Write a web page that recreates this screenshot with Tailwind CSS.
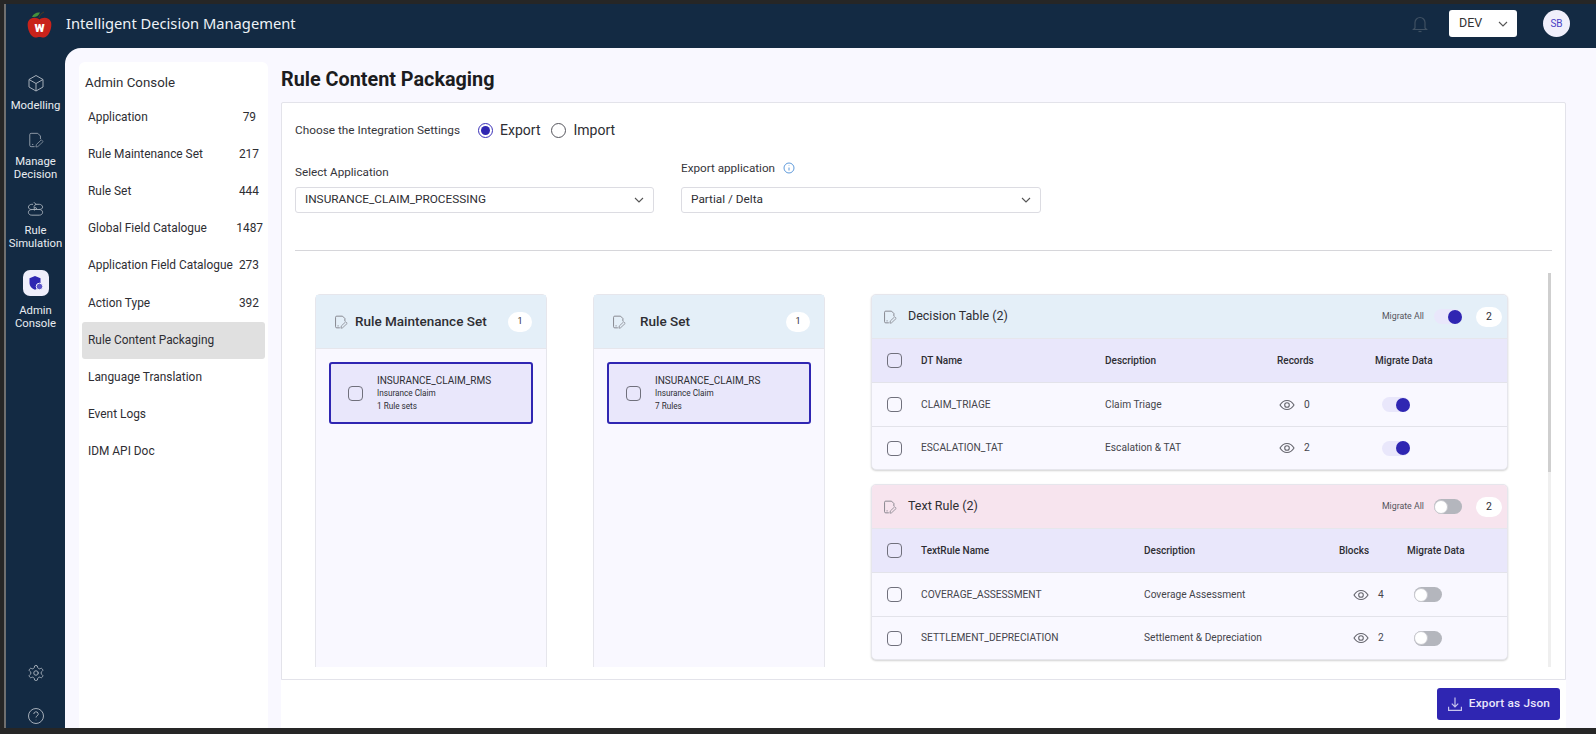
<!DOCTYPE html>
<html lang="en">
<head>
<meta charset="UTF-8">
<title>Rule Content Packaging</title>
<script src="https://cdn.jsdelivr.net/npm/@tailwindcss/browser@4"></script>
</head>
<body class="h-[734px] w-[1596px] overflow-hidden bg-[#262626] pt-1 pb-[6px] pl-1 font-['Roboto',sans-serif] text-[#2e2e33]">
<svg class="hidden">
  <symbol id="edit" viewBox="0 0 18 18" fill="none" stroke="currentColor" stroke-width="1.100" stroke-linecap="round" stroke-linejoin="round">
    <path d="M7 16.500H3.500a1.500 1.500 0 0 1-1.500-1.500V3a1.500 1.500 0 0 1 1.500-1.500h7.500l3 3v3"/>
    <path d="M9 16.500l.4-2.400 5.600-5.300 2 2-5.600 5.300z" stroke-width="0.900"/>
    <path d="M5 14h.5"/>
  </symbol>
  <symbol id="eye" viewBox="0 0 16 16" fill="none" stroke="currentColor" stroke-width="1.100">
    <path d="M1 8c1.800-3 4.200-4.500 7-4.500S13.200 5 15 8c-1.800 3-4.200 4.500-7 4.500S2.800 11 1 8z"/><circle cx="8" cy="8" r="2.300"/>
  </symbol>
</svg>
<div class="flex h-full flex-col border-l-2 border-[#6f6f6f] bg-[#132a43]">
  <header class="flex h-[44px] shrink-0 items-center pb-[5px]">
    <div class="flex w-[59px] justify-center">
      <svg width="25" height="27" viewBox="0 0 25 27" class="mt-[2px] ml-[8px]">
        <path d="M12.500 8.500C15 6 22 5.500 24 11c1.500 5-2 15-7 15.500-1.800.2-3-.6-4.500-.6s-2.700.8-4.500.6C3 26 -.5 16 1 11 3 5.500 10 6 12.500 8.500z" fill="#c9231b"/>
        <path d="M5 6c1.500-3.500 4.500-5 8-4.500C11.500 5 9 6.500 5 6z" fill="#46913c"/>
        <path d="M12 7c.4-2.500 2-4.500 5-6" stroke="#4a3a20" stroke-width="1" fill="none"/>
        <text x="12.500" y="21" text-anchor="middle" font-family="Roboto" font-size="14" font-weight="900" fill="#fff">w</text>
      </svg>
    </div>
    <div class="ml-[1px] font-['Noto_Sans',sans-serif] text-[14.700px] text-[#eef2f7]">Intelligent Decision Management</div>
    <svg class="ml-auto text-[#3f5062]" width="16" height="18" viewBox="0 0 16 18" fill="none" stroke="currentColor" stroke-width="1.200"><path d="M3 13V7.500a5 5 0 0 1 10 0V13l1.500 1.500h-13z"/><path d="M6.500 16.500h3"/></svg>
    <div class="ml-[21px] flex h-[27px] w-[68px] items-center justify-between rounded-[3px] bg-white pr-[9px] pl-[10px] text-[12.500px] text-[#333]">
      <span>DEV</span>
      <svg width="10" height="6" viewBox="0 0 10 6" fill="none" stroke="#555" stroke-width="1.100"><path d="M1 1l4 4 4-4"/></svg>
    </div>
    <div class="mr-[26px] ml-[26px] flex h-[27px] w-[27px] items-center justify-center rounded-full bg-[#f0effb] text-[10px] text-[#4a3fc4]">SB</div>
  </header>
  <div class="flex min-h-0 flex-1">
    <aside class="flex w-[59px] shrink-0 flex-col items-center text-center text-[11.300px] leading-[13.500px] text-[#e9edf2]">
      <svg class="mt-[26px] text-[#a5aeb9]" width="18" height="18" viewBox="0 0 18 18" fill="none" stroke="currentColor" stroke-width="1"><path d="M9 1.500l7 4v7.500l-7 4-7-4V5.500z"/><path d="M2 5.500l7 4 7-4M9 9.500V17"/></svg>
      <div class="mt-[7px]">Modelling</div>
      <svg class="mt-[19px] text-[#8f9aa7]" width="16" height="16"><use href="#edit"/></svg>
      <div class="mt-[7px]">Manage<br>Decision</div>
      <svg class="mt-[19px] text-[#a5aeb9]" width="17" height="17" viewBox="0 0 18 18" fill="none" stroke="currentColor" stroke-width="1" stroke-linecap="round" stroke-linejoin="round"><path d="M6 3.500H5C3 3.500 1.500 5 1.500 6.500S3 9 5 9h8c2 0 3.500 1.200 3.500 3s-1.500 3-3.500 3H5c-2 0-3.500-1.200-3.500-3S3 9 5 9"/><path d="M13 9c2 0 3.500-1 3.500-2.500S15 3.500 13 3.500H9"/><path d="M7.500 1.500L9.500 3.500 7.500 5.500"/><path d="M8 6.500l2.500 1.500L8 9.500z"/></svg>
      <div class="mt-[6px]">Rule<br>Simulation</div>
      <div class="mt-[19px] flex h-[26px] w-[26px] items-center justify-center rounded-[7px] bg-[#f0effb]">
        <svg width="16" height="16" viewBox="0 0 16 16"><path d="M7 1l5.500 2.300v4.500c0 3.500-2.500 6-5.500 7-3-1-5.500-3.500-5.500-7V3.300z" fill="#2f26b2"/><circle cx="11.500" cy="11.500" r="3.300" fill="#5c54c9" stroke="#f0effb" stroke-width="1"/></svg>
      </div>
      <div class="mt-[8px]">Admin<br>Console</div>
      <svg class="mt-auto text-[#a5aeb9]" width="18" height="18" viewBox="0 0 24 24" fill="none" stroke="currentColor" stroke-width="1.300" stroke-linecap="round" stroke-linejoin="round"><path d="M12.220 2h-.44a2 2 0 0 0-2 2v.18a2 2 0 0 1-1 1.730l-.43.25a2 2 0 0 1-2 0l-.15-.08a2 2 0 0 0-2.730.73l-.22.380a2 2 0 0 0 .730 2.730l.15.100a2 2 0 0 1 1 1.720v.510a2 2 0 0 1-1 1.740l-.15.090a2 2 0 0 0-.730 2.730l.22.380a2 2 0 0 0 2.730.730l.15-.080a2 2 0 0 1 2 0l.43.250a2 2 0 0 1 1 1.730V20a2 2 0 0 0 2 2h.44a2 2 0 0 0 2-2v-.18a2 2 0 0 1 1-1.730l.43-.25a2 2 0 0 1 2 0l.15.080a2 2 0 0 0 2.730-.730l.22-.390a2 2 0 0 0-.730-2.730l-.15-.080a2 2 0 0 1-1-1.740v-.5a2 2 0 0 1 1-1.740l.15-.090a2 2 0 0 0 .730-2.730l-.22-.380a2 2 0 0 0-2.730-.730l-.15.080a2 2 0 0 1-2 0l-.43-.250a2 2 0 0 1-1-1.730V4a2 2 0 0 0-2-2z"/><circle cx="12" cy="12" r="3"/></svg>
      <svg class="mt-[25px] mb-[3px] text-[#a5aeb9]" width="18" height="18" viewBox="0 0 18 18" fill="none" stroke="currentColor" stroke-width="1"><circle cx="9" cy="9" r="7.500"/><path d="M6.800 7a2.200 2.200 0 1 1 3.300 1.900c-.8.500-1.100.9-1.100 1.600"/><path d="M9 12.800v.4"/></svg>
    </aside>
    <main class="flex min-w-0 flex-1 gap-[13px] rounded-tl-2xl bg-[#f9f8ff] pt-[14px] pl-[14px]">
      <nav class="w-[189px] shrink-0 rounded-t-md bg-white text-[11.900px] text-[#2e2e33]">
        <div class="px-[6px] pt-[11px] pb-[6px] text-[13.300px]">Admin Console</div>
        <div class="flex h-[37.200px] items-center justify-between pr-[10px] pl-[9px]"><span>Application</span><span class="mr-[2px]">79</span></div>
        <div class="flex h-[37.200px] items-center justify-between pr-[9px] pl-[9px]"><span>Rule Maintenance Set</span><span>217</span></div>
        <div class="flex h-[37.200px] items-center justify-between pr-[9px] pl-[9px]"><span>Rule Set</span><span>444</span></div>
        <div class="flex h-[37.200px] items-center justify-between pr-[5px] pl-[9px]"><span>Global Field Catalogue</span><span>1487</span></div>
        <div class="flex h-[37.200px] items-center justify-between pr-[9px] pl-[9px]"><span>Application Field Catalogue</span><span>273</span></div>
        <div class="flex h-[37.200px] items-center justify-between pr-[9px] pl-[9px]"><span>Action Type</span><span>392</span></div>
        <div class="mx-[3px] flex h-[37.200px] items-center rounded-[3px] bg-[#e0e0e0] pl-[6px]">Rule Content Packaging</div>
        <div class="flex h-[37.200px] items-center pl-[9px]">Language Translation</div>
        <div class="flex h-[37.200px] items-center pl-[9px]">Event Logs</div>
        <div class="flex h-[37.200px] items-center pl-[9px]">IDM API Doc</div>
      </nav>
      <section class="flex w-[1285px] min-w-0 shrink-0 flex-col">
        <h1 class="h-[40px] text-[19.800px] leading-[36px] font-bold text-[#1c1c20]">Rule Content Packaging</h1>
        <div class="flex h-[578px] shrink-0 flex-col rounded-t-[2px] border border-[#e3e3ea] bg-white pt-[17px]">
          <div class="flex items-center pl-[13px] text-[11.800px]">
            <span class="text-[#35353a]">Choose the Integration Settings</span>
            <span class="ml-[18px] flex h-[15px] w-[15px] items-center justify-center rounded-full border border-[#3a30b8]"><span class="h-[9px] w-[9px] rounded-full bg-[#2f26b2]"></span></span>
            <span class="ml-[7px] text-[14px]">Export</span>
            <span class="ml-[11px] h-[15px] w-[15px] rounded-full border border-[#55555c]"></span>
            <span class="ml-[7px] text-[14px]">Import</span>
          </div>
          <div class="mt-[19px] flex gap-[27px] pl-[13px] text-[11.700px]">
            <div class="w-[359px]">
              <div class="mt-[4px] leading-[16px] text-[#35353a]">Select Application</div>
              <div class="mt-[7px] flex h-[26px] items-center justify-between rounded-[3px] border border-[#dcdce2] pr-[9px] pl-[9px] text-[11.800px]">INSURANCE_CLAIM_PROCESSING
                <svg width="10" height="6" viewBox="0 0 10 6" fill="none" stroke="#555" stroke-width="1.100"><path d="M1 1l4 4 4-4"/></svg>
              </div>
            </div>
            <div class="w-[360px]">
              <div class="flex items-center gap-[8px] leading-[16px] text-[#35353a]">Export application
                <svg width="12" height="12" viewBox="0 0 12 12" fill="none" stroke="#4d8fd6" stroke-width="0.900"><circle cx="6" cy="6" r="5"/><path d="M6 5.500v3M6 3.400v.5"/></svg>
              </div>
              <div class="mt-[11px] flex h-[26px] items-center justify-between rounded-[3px] border border-[#dcdce2] pr-[9px] pl-[9px] text-[11.800px]">Partial / Delta
                <svg width="10" height="6" viewBox="0 0 10 6" fill="none" stroke="#555" stroke-width="1.100"><path d="M1 1l4 4 4-4"/></svg>
              </div>
            </div>
          </div>
          <div class="mx-[13px] mt-[37px] h-px w-[1257px] shrink-0 bg-[#d6d6da]"></div>
          <div class="relative mt-[22px] mb-[12px] min-h-0 flex-1 overflow-hidden">
            <div class="flex items-start pt-[21px] pl-[33px]">
              <div class="h-[500px] w-[232px] shrink-0 rounded-[5px] border border-[#e6e6ec] bg-[#f9f8ff]">
                <div class="flex h-[54px] items-center border-b border-[#e6e6ec] bg-[#e4eff8] pr-[14px] pl-[18px]">
                  <svg class="text-[#77777f]" width="14" height="14"><use href="#edit"/></svg>
                  <span class="ml-[7px] text-[13.500px] font-medium">Rule Maintenance Set</span>
                  <span class="ml-auto flex h-[20px] w-[24px] items-center justify-center rounded-full bg-white text-[9px]">1</span>
                </div>
                <div class="mx-[13px] mt-[13px] flex h-[62px] items-center rounded-[3px] border-2 border-[#2f26b2] bg-[#e9e7fb] pl-[17px]">
                  <span class="h-[15px] w-[15px] rounded-[4px] border-[1.500px] border-[#70707c]"></span>
                  <div class="ml-[14px] text-[8.200px] leading-[13px]"><div class="text-[10px]">INSURANCE_CLAIM_RMS</div><div>Insurance Claim</div><div>1 Rule sets</div></div>
                </div>
              </div>
              <div class="ml-[46px] h-[500px] w-[232px] shrink-0 rounded-[5px] border border-[#e6e6ec] bg-[#f9f8ff]">
                <div class="flex h-[54px] items-center border-b border-[#e6e6ec] bg-[#e4eff8] pr-[14px] pl-[18px]">
                  <svg class="text-[#77777f]" width="14" height="14"><use href="#edit"/></svg>
                  <span class="ml-[14px] text-[13.500px] font-medium">Rule Set</span>
                  <span class="ml-auto flex h-[20px] w-[24px] items-center justify-center rounded-full bg-white text-[9px]">1</span>
                </div>
                <div class="mx-[13px] mt-[13px] flex h-[62px] items-center rounded-[3px] border-2 border-[#2f26b2] bg-[#e9e7fb] pl-[17px]">
                  <span class="h-[15px] w-[15px] rounded-[4px] border-[1.500px] border-[#70707c]"></span>
                  <div class="ml-[14px] text-[8.200px] leading-[13px]"><div class="text-[10px]">INSURANCE_CLAIM_RS</div><div>Insurance Claim</div><div>7 Rules</div></div>
                </div>
              </div>
              <div class="ml-[46px] w-[637px] shrink-0">
                <div class="overflow-hidden rounded-[5px] border border-[#e6e6ec] bg-[#f9f8ff] shadow-[0_1px_2px_#0000002e]">
                  <div class="flex h-[44px] items-center border-b border-[#e6e6ec] bg-[#e4eff8] pr-[5px] pl-[11px]">
                    <svg class="text-[#77777f]" width="14" height="14"><use href="#edit"/></svg>
                    <span class="ml-[11px] text-[12.500px]">Decision Table (2)</span>
                    <span class="ml-auto text-[8.800px] text-[#55555c]">Migrate All</span>
                    <span class="relative ml-[10px] h-[15px] w-[28px] rounded-full bg-[#e9e7fb]"><span class="absolute top-[0.500px] right-0 h-[14px] w-[14px] rounded-full bg-[#2f26b2]"></span></span>
                    <span class="ml-[14px] flex h-[20px] w-[26px] items-center justify-center rounded-full bg-white text-[10.500px]">2</span>
                  </div>
                  <div class="flex h-[44px] items-center border-b border-[#e3e3ea] bg-[#e9e7fb] text-[10px] font-medium">
                    <span class="ml-[15px] h-[15px] w-[15px] shrink-0 rounded-[4px] border-[1.500px] border-[#70707c]"></span>
                    <span class="ml-[19px] w-[184px]">DT Name</span><span class="w-[172px]">Description</span><span class="w-[98px]">Records</span><span>Migrate Data</span>
                  </div>
                  <div class="flex h-[44px] items-center border-b border-[#e3e3ea] text-[10.200px] text-[#45454c]">
                    <span class="ml-[15px] h-[15px] w-[15px] shrink-0 rounded-[4px] border-[1.500px] border-[#70707c]"></span>
                    <span class="ml-[19px] w-[184px]">CLAIM_TRIAGE</span><span class="w-[174px]">Claim Triage</span>
                    <svg class="text-[#66666e]" width="16" height="16"><use href="#eye"/></svg><span class="ml-[9px] w-[78px]">0</span>
                    <span class="relative h-[15px] w-[28px] rounded-full bg-[#e9e7fb]"><span class="absolute top-[0.500px] right-0 h-[14px] w-[14px] rounded-full bg-[#2f26b2]"></span></span>
                  </div>
                  <div class="flex h-[42px] items-center text-[10.200px] text-[#45454c]">
                    <span class="ml-[15px] h-[15px] w-[15px] shrink-0 rounded-[4px] border-[1.500px] border-[#70707c]"></span>
                    <span class="ml-[19px] w-[184px]">ESCALATION_TAT</span><span class="w-[174px]">Escalation &amp; TAT</span>
                    <svg class="text-[#66666e]" width="16" height="16"><use href="#eye"/></svg><span class="ml-[9px] w-[78px]">2</span>
                    <span class="relative h-[15px] w-[28px] rounded-full bg-[#e9e7fb]"><span class="absolute top-[0.500px] right-0 h-[14px] w-[14px] rounded-full bg-[#2f26b2]"></span></span>
                  </div>
                </div>
                <div class="mt-[14px] overflow-hidden rounded-[5px] border border-[#e6e6ec] bg-[#f9f8ff] shadow-[0_1px_2px_#0000002e]">
                  <div class="flex h-[44px] items-center border-b border-[#e6e6ec] bg-[#f7e4ee] pr-[5px] pl-[11px]">
                    <svg class="text-[#77777f]" width="14" height="14"><use href="#edit"/></svg>
                    <span class="ml-[11px] text-[12.500px]">Text Rule (2)</span>
                    <span class="ml-auto text-[8.800px] text-[#55555c]">Migrate All</span>
                    <span class="relative ml-[10px] h-[15px] w-[28px] rounded-full bg-[#b4b6bd]"><span class="absolute top-[0.500px] left-0 h-[14px] w-[14px] rounded-full border border-[#c8c8ce] bg-white"></span></span>
                    <span class="ml-[14px] flex h-[20px] w-[26px] items-center justify-center rounded-full bg-white text-[10.500px]">2</span>
                  </div>
                  <div class="flex h-[44px] items-center border-b border-[#e3e3ea] bg-[#e9e7fb] text-[10px] font-medium">
                    <span class="ml-[15px] h-[15px] w-[15px] shrink-0 rounded-[4px] border-[1.500px] border-[#70707c]"></span>
                    <span class="ml-[19px] w-[223px]">TextRule Name</span><span class="w-[195px]">Description</span><span class="w-[68px]">Blocks</span><span>Migrate Data</span>
                  </div>
                  <div class="flex h-[44px] items-center border-b border-[#e3e3ea] text-[10.200px] text-[#45454c]">
                    <span class="ml-[15px] h-[15px] w-[15px] shrink-0 rounded-[4px] border-[1.500px] border-[#70707c]"></span>
                    <span class="ml-[19px] w-[223px]">COVERAGE_ASSESSMENT</span><span class="w-[209px]">Coverage Assessment</span>
                    <svg class="text-[#66666e]" width="16" height="16"><use href="#eye"/></svg><span class="ml-[9px] w-[36px]">4</span>
                    <span class="relative h-[15px] w-[28px] rounded-full bg-[#b4b6bd]"><span class="absolute top-[0.500px] left-0 h-[14px] w-[14px] rounded-full border border-[#c8c8ce] bg-white"></span></span>
                  </div>
                  <div class="flex h-[42px] items-center text-[10.200px] text-[#45454c]">
                    <span class="ml-[15px] h-[15px] w-[15px] shrink-0 rounded-[4px] border-[1.500px] border-[#70707c]"></span>
                    <span class="ml-[19px] w-[223px]">SETTLEMENT_DEPRECIATION</span><span class="w-[209px]">Settlement &amp; Depreciation</span>
                    <svg class="text-[#66666e]" width="16" height="16"><use href="#eye"/></svg><span class="ml-[9px] w-[36px]">2</span>
                    <span class="relative h-[15px] w-[28px] rounded-full bg-[#b4b6bd]"><span class="absolute top-[0.500px] left-0 h-[14px] w-[14px] rounded-full border border-[#c8c8ce] bg-white"></span></span>
                  </div>
                </div>
              </div>
            </div>
            <div class="absolute top-0 right-[14px] h-full w-[3px] bg-[#efefef]"><div class="h-[199px] bg-[#cfcfcf]"></div></div>
          </div>
        </div>
        <div class="flex flex-1 items-start justify-end bg-white pt-[8px] pr-[6px]">
          <div class="flex h-[32px] w-[123px] items-center justify-center gap-[6px] rounded-[3px] bg-[#2f26b2] text-[11.800px] font-medium tracking-[0.2px] text-[#e9e7fb]">
            <svg width="16" height="16" viewBox="0 0 15 15" fill="none" stroke="#c9c6ee" stroke-width="1.100"><path d="M7.500 1.500v8.500M4.500 7.200l3 3 3-3M1.500 10v3.500h12V10"/></svg>
            Export as Json
          </div>
        </div>
      </section>
    </main>
  </div>
</div>
</body>
</html>
